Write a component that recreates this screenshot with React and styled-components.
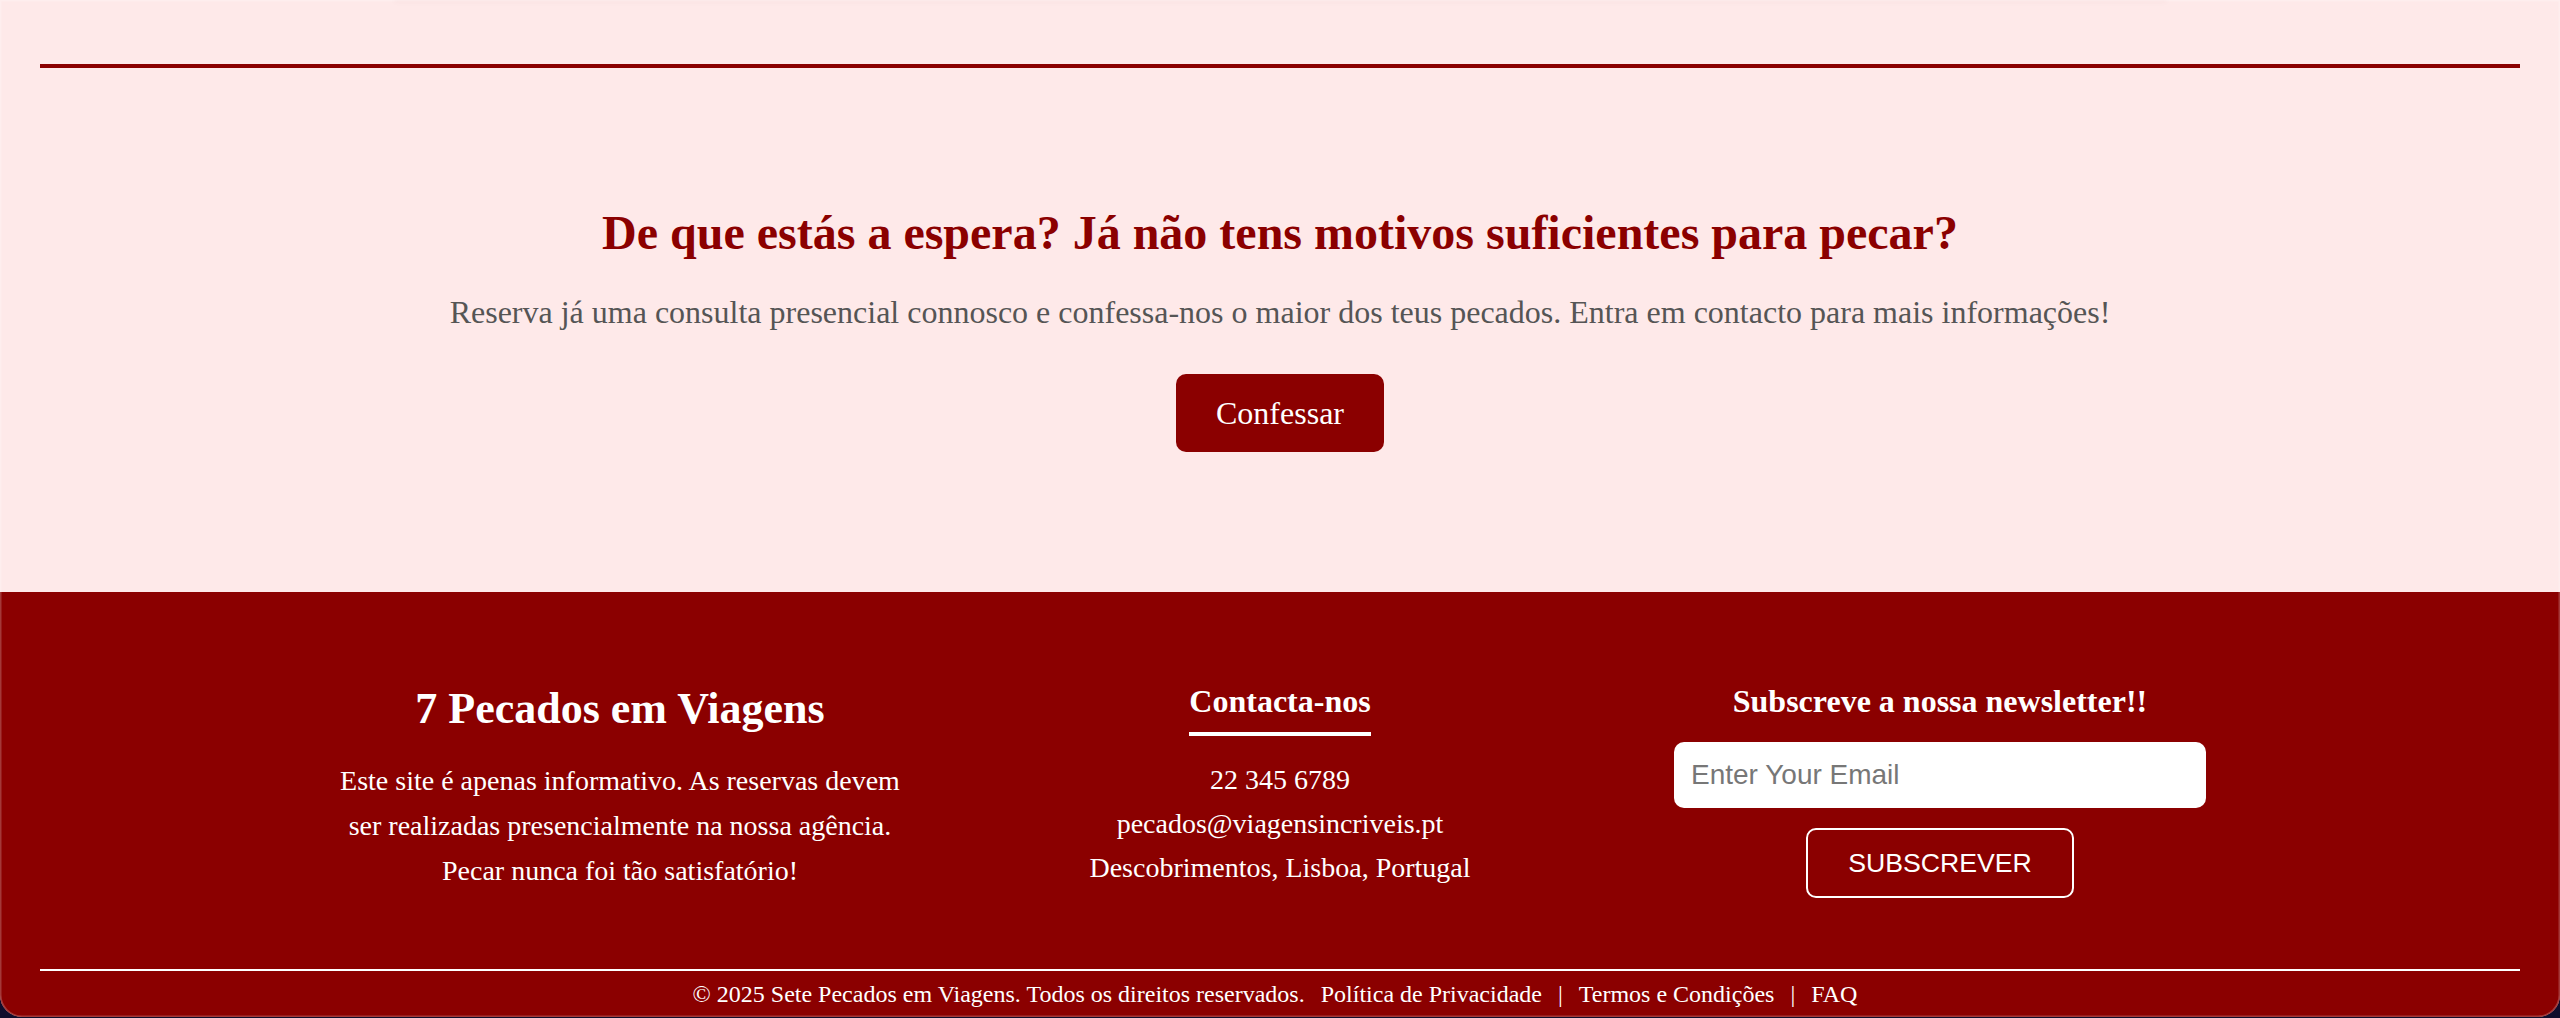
import React from "react";
import styled, { createGlobalStyle } from "styled-components";

const RED = "#8b0000";
const PINK = "#fee9e9";

const GlobalStyle = createGlobalStyle`
  html, body {
    margin: 0;
    padding: 0;
    background: #100d2c;
  }
  body {
    font-family: "Liberation Serif", "Times New Roman", serif;
  }
  * { box-sizing: border-box; }
`;

const Window = styled.div`
  position: relative;
  height: 1017px;
  display: flex;
  flex-direction: column;
  background: ${PINK};
  border-radius: 0 0 22px 22px;
  overflow: hidden;
  &::after {
    content: "";
    position: absolute;
    inset: 0;
    border-radius: 0 0 22px 22px;
    box-shadow: inset 0 0 0 1.5px rgba(255, 255, 255, 0.22);
    pointer-events: none;
  }
`;

const CardEdge = styled.div`
  width: 1771px;
  height: 0;
  margin: 0 auto;
  box-shadow: 0 1px 5px 1px rgba(120, 0, 0, 0.06);
`;

const Divider = styled.hr`
  margin: 64px 40px 0;
  border: 0;
  height: 4px;
  background: ${RED};
`;

const Cta = styled.section`
  padding: 137px 40px 140px;
  text-align: center;
`;

const CtaTitle = styled.h2`
  margin: 0;
  font-size: 48px;
  line-height: 56px;
  font-weight: 700;
  color: ${RED};
`;

const CtaText = styled.p`
  margin: 32px 0 0;
  font-size: 32px;
  line-height: 38px;
  color: #555555;
`;

const CtaButton = styled.button`
  margin-top: 43px;
  padding: 20px 40px;
  border: none;
  border-radius: 10px;
  background: ${RED};
  color: #fff;
  font-family: "Liberation Serif", "Times New Roman", serif;
  font-size: 32px;
  line-height: 38px;
  cursor: pointer;
`;

const Footer = styled.footer`
  flex: 1;
  background: ${RED};
  color: #fff;
  padding-top: 90px;
  display: flex;
  flex-direction: column;
`;

const Columns = styled.div`
  display: grid;
  grid-template-columns: repeat(3, 600px);
  column-gap: 60px;
  justify-content: center;
  align-items: start;
`;

const Column = styled.div`
  display: flex;
  flex-direction: column;
  align-items: center;
  text-align: center;
`;

const BrandTitle = styled.h2`
  margin: 0;
  font-size: 44px;
  line-height: 54px;
  font-weight: 700;
`;

const BrandText = styled.p`
  margin: 22px 0 0;
  max-width: 590px;
  font-size: 28px;
  line-height: 45px;
`;

const ColTitle = styled.h3`
  margin: 0;
  font-size: 32px;
  line-height: 38px;
  font-weight: 700;
  padding-bottom: ${(p) => (p.$underlined ? "12px" : "0")};
  border-bottom: ${(p) => (p.$underlined ? "4px solid #fff" : "none")};
`;

const ContactList = styled.div`
  margin-top: 22px;
  display: flex;
  flex-direction: column;
  font-size: 28px;
  line-height: 44px;
`;

const EmailInput = styled.input`
  margin-top: 22px;
  width: 532px;
  height: 66px;
  padding: 0 17px;
  border: none;
  border-radius: 10px;
  background: #fff;
  font-family: "Liberation Sans", Arial, sans-serif;
  font-size: 28px;
  color: #222;
  outline: none;
  &::placeholder {
    color: #777777;
  }
`;

const SubscribeButton = styled.button`
  margin-top: 20px;
  padding: 18px 40px;
  background: transparent;
  border: 2px solid #fff;
  border-radius: 10px;
  color: #fff;
  font-family: "Liberation Sans", Arial, sans-serif;
  font-size: 26.67px;
  line-height: 30px;
  cursor: pointer;
`;

const BottomRule = styled.hr`
  margin: 71px 40px 0;
  border: 0;
  height: 2px;
  background: #fff;
`;

const BottomBar = styled.div`
  padding-top: 8px;
  text-align: center;
  font-size: 24px;
  line-height: 30px;
`;

const BottomLink = styled.a`
  color: #fff;
  text-decoration: none;
  margin: 0 10px;
`;

export default function App() {
  return (
    <>
      <GlobalStyle />
      <Window>
        <CardEdge />
        <Divider />
        <Cta>
          <CtaTitle>De que estás a espera? Já não tens motivos suficientes para pecar?</CtaTitle>
          <CtaText>
            Reserva já uma consulta presencial connosco e confessa-nos o maior dos teus pecados. Entra em contacto para mais informações!
          </CtaText>
          <CtaButton>Confessar</CtaButton>
        </Cta>
        <Footer>
          <Columns>
            <Column>
              <BrandTitle>7 Pecados em Viagens</BrandTitle>
              <BrandText>
                Este site é apenas informativo. As reservas devem ser realizadas presencialmente na nossa agência. Pecar nunca foi tão satisfatório!
              </BrandText>
            </Column>
            <Column>
              <ColTitle $underlined>Contacta-nos</ColTitle>
              <ContactList>
                <span>22 345 6789</span>
                <span>pecados@viagensincriveis.pt</span>
                <span>Descobrimentos, Lisboa, Portugal</span>
              </ContactList>
            </Column>
            <Column>
              <ColTitle>Subscreve a nossa newsletter!!</ColTitle>
              <EmailInput type="email" placeholder="Enter Your Email" />
              <SubscribeButton>SUBSCREVER</SubscribeButton>
            </Column>
          </Columns>
          <BottomRule />
          <BottomBar>
            © 2025 Sete Pecados em Viagens. Todos os direitos reservados.{" "}
            <BottomLink href="#">Política de Privacidade</BottomLink> |{" "}
            <BottomLink href="#">Termos e Condições</BottomLink> |{" "}
            <BottomLink href="#">FAQ</BottomLink>
          </BottomBar>
        </Footer>
      </Window>
    </>
  );
}
